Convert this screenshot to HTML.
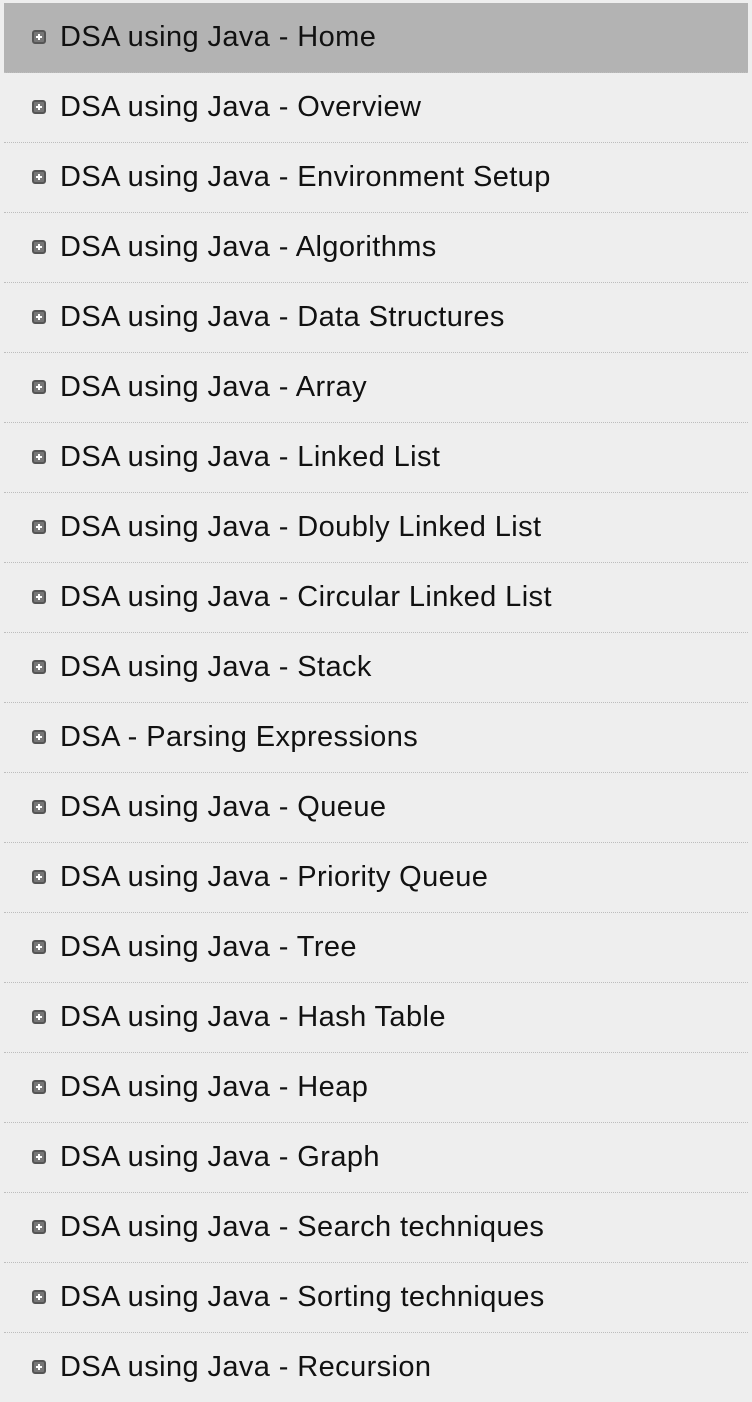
<!DOCTYPE html>
<html><head><style>
html,body{margin:0;padding:0;background:#eeeeee;width:752px;height:1402px;overflow:hidden}
ul{list-style:none;margin:0;padding:3px 4px 0 4px}
li{height:69px;border-bottom:1px dotted #bdbdbd;display:flex;align-items:center;font-family:"Liberation Sans",sans-serif;font-size:29px;letter-spacing:0.4px;color:#111;padding-left:28px;box-sizing:content-box}
li span.t{position:relative;top:0px}
li.a{background:#b3b3b3}
.b{width:10px;height:10px;border:2px solid #555;border-radius:3px;background:#777;margin-right:14px;position:relative;top:-1px;box-sizing:content-box;flex:none}
.b:before{content:"";position:absolute;left:2px;top:4px;width:6px;height:2px;background:#fff}
.b:after{content:"";position:absolute;left:4px;top:2px;width:2px;height:6px;background:#fff}
</style></head><body><ul>
<li class="a"><span class="b"></span><span class="t">DSA using Java - Home</span></li>
<li><span class="b"></span><span class="t">DSA using Java - Overview</span></li>
<li><span class="b"></span><span class="t">DSA using Java - Environment Setup</span></li>
<li><span class="b"></span><span class="t">DSA using Java - Algorithms</span></li>
<li><span class="b"></span><span class="t">DSA using Java - Data Structures</span></li>
<li><span class="b"></span><span class="t">DSA using Java - Array</span></li>
<li><span class="b"></span><span class="t">DSA using Java - Linked List</span></li>
<li><span class="b"></span><span class="t">DSA using Java - Doubly Linked List</span></li>
<li><span class="b"></span><span class="t">DSA using Java - Circular Linked List</span></li>
<li><span class="b"></span><span class="t">DSA using Java - Stack</span></li>
<li><span class="b"></span><span class="t">DSA - Parsing Expressions</span></li>
<li><span class="b"></span><span class="t">DSA using Java - Queue</span></li>
<li><span class="b"></span><span class="t">DSA using Java - Priority Queue</span></li>
<li><span class="b"></span><span class="t">DSA using Java - Tree</span></li>
<li><span class="b"></span><span class="t">DSA using Java - Hash Table</span></li>
<li><span class="b"></span><span class="t">DSA using Java - Heap</span></li>
<li><span class="b"></span><span class="t">DSA using Java - Graph</span></li>
<li><span class="b"></span><span class="t">DSA using Java - Search techniques</span></li>
<li><span class="b"></span><span class="t">DSA using Java - Sorting techniques</span></li>
<li><span class="b"></span><span class="t">DSA using Java - Recursion</span></li>
</ul></body></html>
